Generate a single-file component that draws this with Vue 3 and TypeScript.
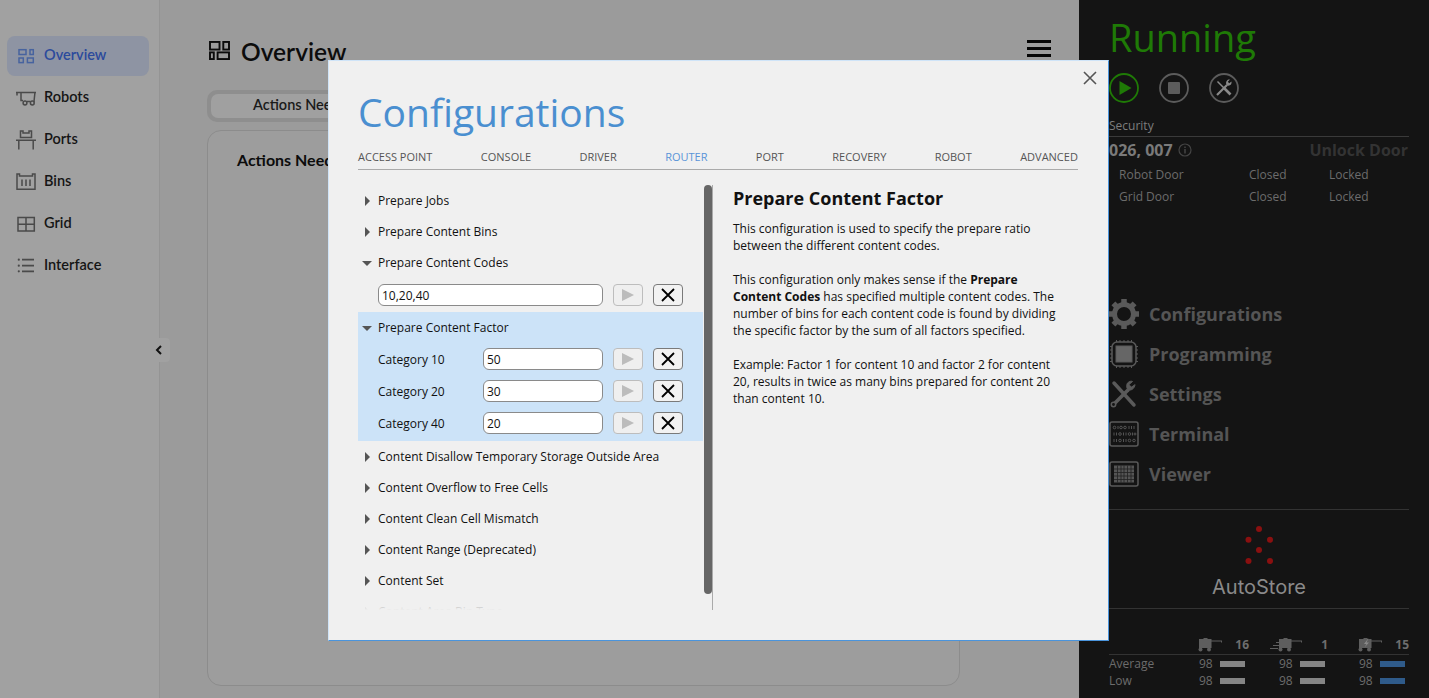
<script setup lang="ts">
const navItems = ['Overview', 'Robots', 'Ports', 'Bins', 'Grid', 'Interface']
const tabs = ['ACCESS POINT', 'CONSOLE', 'DRIVER', 'ROUTER', 'PORT', 'RECOVERY', 'ROBOT', 'ADVANCED']
const categories = [
  { label: 'Category 10', value: '50' },
  { label: 'Category 20', value: '30' },
  { label: 'Category 40', value: '20' }
]
const before = ['Prepare Jobs', 'Prepare Content Bins']
const after = [
  'Content Disallow Temporary Storage Outside Area',
  'Content Overflow to Free Cells',
  'Content Clean Cell Mismatch',
  'Content Range (Deprecated)',
  'Content Set',
  'Content Area Bin Type'
]
const menu = ['Configurations', 'Programming', 'Settings', 'Terminal', 'Viewer']
const doors = ['Robot Door', 'Grid Door']
const stats = ['Average', 'Low']
</script>

<template>
  <div class="page">
    <aside class="sidebar">
      <nav class="nav">
        <div v-for="(item, i) in navItems" :key="item" class="nav-item" :class="{ active: i === 0 }">
          <svg class="nav-icon" viewBox="0 0 20 20" fill="none" stroke="currentColor" stroke-width="1.5">
            <g v-if="i === 0">
              <rect x="3" y="5.700" width="7" height="4.800" /><rect x="14" y="5.700" width="3.300" height="4.800" />
              <rect x="3" y="14" width="4.300" height="4.600" /><rect x="11.400" y="14" width="5.900" height="4.600" />
            </g>
            <g v-else-if="i === 1">
              <path d="M0 6.500h20M1 6v3.500M19 6l-1 9.500h-.7M5 7v7.500h2M11 15.500h3.300" />
              <circle cx="9" cy="17" r="1.900" /><circle cx="16.300" cy="17" r="1.900" />
            </g>
            <g v-else-if="i === 2">
              <path d="M0 12.200h20M2.800 12.500v9M17.200 12.500v9M4.500 9.500V3h2.500v2h6V3h2.500v6.500z" />
            </g>
            <g v-else-if="i === 3">
              <path d="M1 4v15.300h18V4h-2.500v2h-13V4z" /><path d="M6 9.500V16M10 9.500V16M14 9.500V16" />
            </g>
            <g v-else-if="i === 4">
              <rect x="2" y="5.500" width="16.300" height="13.500" /><path d="M2 12.200h16.300M10 5.500V19" />
            </g>
            <g v-else>
              <path d="M6 5.700h12M6 11.700h12M6 17.300h12" stroke-width="1.700" />
              <circle cx="2.800" cy="5.700" r="1.100" fill="currentColor" stroke="none" />
              <circle cx="2.800" cy="11.700" r="1.100" fill="currentColor" stroke="none" />
              <circle cx="2.800" cy="17.300" r="1.100" fill="currentColor" stroke="none" />
            </g>
          </svg>
          <span>{{ item }}</span>
        </div>
      </nav>
      <button class="collapse" type="button">
        <svg viewBox="0 0 8 10" width="8" height="10"><path d="M6 1 2 5l4 4" fill="none" stroke="#111" stroke-width="2" /></svg>
      </button>
    </aside>

    <main class="main">
      <header class="main-head">
        <h1 class="main-title">
          <svg class="title-icon" viewBox="0 0 22 20" fill="none" stroke="#0c0c0c" stroke-width="2">
            <rect x="1" y="1" width="10" height="8" /><rect x="15" y="1" width="6" height="8" />
            <rect x="1" y="12" width="4" height="7" /><rect x="9" y="12" width="12" height="7" />
          </svg>
          Overview
        </h1>
        <div class="hamburger"><i></i><i></i><i></i></div>
      </header>
      <div class="pill"><div class="pill-btn">Actions Needed</div></div>
      <section class="card"><h2 class="card-title">Actions Needed</h2></section>
    </main>

    <aside class="panel">
      <div class="running">Running</div>
      <div class="controls">
        <svg class="ctl" viewBox="0 0 30 30"><circle cx="15" cy="15" r="14" fill="none" stroke="#1f7a06" stroke-width="1.800" /><path d="M10.500 8v14l12-7z" fill="#1f7a06" /></svg>
        <svg class="ctl" viewBox="0 0 30 30"><circle cx="15" cy="15" r="14" fill="none" stroke="#5c5c5c" stroke-width="1.800" /><rect x="9" y="9" width="12" height="12" rx="1" fill="#5c5c5c" /></svg>
        <svg class="ctl" viewBox="0 0 30 30">
          <circle cx="15" cy="15" r="14" fill="none" stroke="#5c5c5c" stroke-width="1.800" />
          <path d="M8.500 8.500 15 15" stroke="#8a8a8a" stroke-width="1.500" />
          <path d="M15 15l6.500 6.500" stroke="#8a8a8a" stroke-width="2.600" />
          <path d="M8 22 18 12" stroke="#8a8a8a" stroke-width="2.200" />
          <path d="M22.500 8.500c.6 2.500-1.500 5-4.500 4-1.500-1.500-1.200-4 .5-5.500.8-.5 1.700-.6 2.500-.4l-2.200 2.200 1.400 1.500z" fill="#8a8a8a" />
        </svg>
      </div>
      <div class="sec-label">Security</div>
      <div class="sec-row">
        <span class="door-id">026, 007</span>
        <svg class="info" viewBox="0 0 14 14"><circle cx="7" cy="7" r="6" fill="none" stroke="#444" stroke-width="1.200" /><path d="M7 6v4.500M7 3.500v1.500" stroke="#444" stroke-width="1.500" /></svg>
        <span class="unlock">Unlock Door</span>
      </div>
      <div v-for="d in doors" :key="d" class="door">
        <span class="door-name">{{ d }}</span><span class="door-state">Closed</span><span>Locked</span>
      </div>

      <div class="menu">
        <div v-for="(m, i) in menu" :key="m" class="menu-item">
          <svg class="menu-icon" viewBox="0 0 30 30" fill="none">
            <g v-if="i === 0" stroke="#5a5a5a">
              <circle cx="15" cy="15" r="9.500" stroke-width="5" />
              <path d="M15 0v30M0 15h30M4.400 4.400l21.200 21.200M25.600 4.400 4.400 25.600" stroke-width="5.500" stroke-dasharray="5.500 19 5.500" />
            </g>
            <g v-else-if="i === 1" stroke="#5a5a5a">
              <rect x="3" y="3" width="24" height="24" rx="5" stroke-width="1.500" />
              <rect x="7" y="7" width="16" height="16" fill="#666" stroke-width="1" />
              <path d="M7.500 1v2M11 1v2M15 1v2M19 1v2M22.500 1v2M7.500 27v2M11 27v2M15 27v2M19 27v2M22.500 27v2M1 7.500h2M1 11h2M1 15h2M1 19h2M1 22.500h2M27 7.500h2M27 11h2M27 15h2M27 19h2M27 22.500h2" stroke-width="1" />
            </g>
            <g v-else-if="i === 2" stroke="#5a5a5a" stroke-linecap="round">
              <path d="M5 4l20 22" stroke-width="3.500" />
              <path d="M4 26 19 11" stroke-width="3.500" />
              <path d="M26 6c-.5 3-3 5.500-6 5-2.500-1-3-4-1.500-7 2-2 4-2 5-1.500l-3.500 3 2 2.500z" fill="#5a5a5a" stroke-width="1" />
              <circle cx="4.500" cy="25.500" r="2.200" fill="#141414" stroke-width="1.500" />
            </g>
            <g v-else-if="i === 3" stroke="#5a5a5a">
              <rect x="1" y="3" width="28" height="24" rx="2" stroke-width="1.500" />
              <g stroke-width=".9">
                <circle cx="5.500" cy="8.500" r="1.300" /><path d="M9 7v3" /><circle cx="12" cy="8.500" r="1.300" /><circle cx="16" cy="8.500" r="1.300" /><path d="M20 7v3M22.500 7v3M25 7v3" />
                <path d="M5 13.500v3M7.500 13.500v3" /><circle cx="11" cy="15" r="1.300" /><path d="M14.500 13.500v3M17 13.500v3" /><circle cx="20.500" cy="15" r="1.300" /><path d="M23.500 13.500v3" /><circle cx="26" cy="15" r="1" />
                <path d="M5 20v3M7.500 20v3" /><circle cx="11" cy="21.500" r="1.300" /><path d="M14.500 20v3M17 20v3" /><circle cx="20.500" cy="21.500" r="1.300" /><circle cx="25" cy="21.500" r="1.300" />
              </g>
            </g>
            <g v-else stroke="#5a5a5a">
              <rect x="1" y="3" width="28" height="24" rx="2" stroke-width="1.500" />
              <rect x="5" y="6.500" width="20" height="17" fill="#555" stroke="none" />
              <path d="M8.500 6.500v17M12 6.500v17M15 6.500v17M18.500 6.500v17M22 6.500v17M5 10h20M5 13.500h20M5 17h20M5 20.500h20" stroke="#222" stroke-width=".8" />
            </g>
          </svg>
          <span>{{ m }}</span>
        </div>
      </div>

      <div class="brand">
        <svg class="dots" viewBox="0 0 28 42" fill="#8a1010">
          <circle cx="14" cy="4" r="3" /><circle cx="3.500" cy="14.700" r="3" /><circle cx="25" cy="14.700" r="3" />
          <circle cx="14" cy="25" r="3" /><circle cx="3.500" cy="36" r="3" /><circle cx="25" cy="36" r="3" />
        </svg>
        <div class="brand-name">AutoStore</div>
      </div>

      <div class="stat-head">
        <div class="sh-cell c1">
          <svg class="robot" viewBox="0 0 24 14" fill="#5e5e5e"><path d="M1 1h4l1-1h3l1 1h3.500v1.500H24v2h-1v-1H13.500V10H1z" /><circle cx="2.500" cy="11.500" r="2" /><circle cx="11" cy="11.500" r="2" /></svg>
          <span>16</span>
        </div>
        <div class="sh-cell c2">
          <svg class="robot wide" viewBox="0 0 32 14" fill="#5e5e5e"><path d="M9 1h4l1-1h3l1 1h3.500v1.500H32v2h-1v-1H21.500V10H9z" /><circle cx="10.500" cy="11.500" r="2" /><circle cx="19" cy="11.500" r="2" /><path d="M6 4h3v1H6zM3 7h6v1H3zM0 10h8v1H0z" /></svg>
          <span>1</span>
        </div>
        <div class="sh-cell c3">
          <svg class="robot" viewBox="0 0 24 14" fill="#5e5e5e"><path d="M1 1h4l1-1h3l1 1h3.500v1.500H24v2h-1v-1H13.500V10H1z" /><circle cx="2.500" cy="11.500" r="2" /><circle cx="11" cy="11.500" r="2" /><path d="M10.500 0 6 6h2.500L6.500 9.500 11 4.500H8.500z" fill="#8a8a8a" /></svg>
          <span>15</span>
        </div>
      </div>
      <div v-for="s in stats" :key="s" class="stat-row">
        <span class="stat-label">{{ s }}</span>
        <span v-for="n in 3" :key="n" class="stat-cell">98<i class="bar" :class="{ blue: n === 3 }"></i></span>
      </div>
    </aside>

    <div class="dialog">
      <svg class="close" viewBox="0 0 14 14"><path d="M1 1l12 12M13 1 1 13" stroke="#555" stroke-width="1.600" /></svg>
      <h2 class="dialog-title">Configurations</h2>
      <div class="tabs">
        <span v-for="t in tabs" :key="t" :class="{ current: t === 'ROUTER' }">{{ t }}</span>
      </div>
      <div class="dialog-body">
        <div class="list-wrap">
          <div class="list">
            <div v-for="b in before" :key="b" class="row"><i class="tri-right"></i>{{ b }}</div>
            <div class="row"><i class="tri-down"></i>Prepare Content Codes</div>
            <div class="field-row single">
              <input class="field" value="10,20,40" />
              <button class="btn" type="button"><i class="play"></i></button>
              <button class="btn x" type="button"><svg viewBox="0 0 14 14"><path d="M1 1l12 12M13 1 1 13" stroke="#000" stroke-width="1.800" /></svg></button>
            </div>
            <div class="selected">
              <div class="row"><i class="tri-down"></i>Prepare Content Factor</div>
              <div v-for="c in categories" :key="c.label" class="field-row">
                <label class="cat">{{ c.label }}</label>
                <input class="field" :value="c.value" />
                <button class="btn" type="button"><i class="play"></i></button>
                <button class="btn x" type="button"><svg viewBox="0 0 14 14"><path d="M1 1l12 12M13 1 1 13" stroke="#000" stroke-width="1.800" /></svg></button>
              </div>
            </div>
            <div v-for="a in after" :key="a" class="row"><i class="tri-right"></i>{{ a }}</div>
          </div>
          <div class="scroll-track"><div class="scroll-thumb"></div></div>
        </div>
        <div class="help">
          <h3 class="help-title">Prepare Content Factor</h3>
          <p>This configuration is used to specify the prepare ratio<br />between the different content codes.</p>
          <p>This configuration only makes sense if the <b>Prepare<br />Content Codes</b> has specified multiple content codes. The<br />number of bins for each content code is found by dividing<br />the specific factor by the sum of all factors specified.</p>
          <p>Example: Factor 1 for content 10 and factor 2 for content<br />20, results in twice as many bins prepared for content 20<br />than content 10.</p>
        </div>
      </div>
    </div>
  </div>
</template>

<style>
html, body { margin: 0; overflow: hidden; background: #9b9b9b; }
</style>

<style scoped>
.page {
  position: relative;
  display: flex;
  width: 1429px;
  height: 698px;
  overflow: hidden;
  font-family: "Open Sans", sans-serif;
}
.sidebar {
  position: relative;
  flex: 0 0 160px;
  box-sizing: border-box;
  background: #a1a1a1;
  border-right: 1px solid #949494;
  padding: 36px 10px 0 7px;
  font-family: Lato, sans-serif;
}
.nav { display: flex; flex-direction: column; }
.nav-item {
  display: flex;
  align-items: center;
  gap: 8px;
  height: 40px;
  box-sizing: border-box;
  padding-bottom: 3px;
  margin-bottom: 2px;
  padding-left: 9px;
  border-radius: 8px;
  font-size: 14.5px;
  font-weight: 600;
  color: #151515;
}
.nav-item .nav-icon { color: #4a4a4a; }
.nav-item.active { background: #8e94a3; color: #2b4a9c; }
.nav-item.active .nav-icon { color: #47639f; }
.nav-icon { width: 20px; height: 20px; flex: none; margin-top: -1px; overflow: visible; }
.collapse {
  position: absolute;
  top: 338px;
  left: 150px;
  width: 20px;
  height: 24px;
  padding: 0;
  border: 0;
  border-radius: 0 4px 4px 0;
  background: #a1a1a1;
  display: flex;
  align-items: center;
  justify-content: center;
}
.collapse svg { margin-left: -3px; }

.main { flex: 1; min-width: 0; background: #9b9b9b; padding: 37px 28px 12px 47px; box-sizing: border-box; font-family: Lato, sans-serif; }
.main-head { display: flex; align-items: center; justify-content: space-between; height: 28px; }
.main-title { display: flex; align-items: center; gap: 11px; margin: 0 0 0 2px; font-size: 24.5px; font-weight: 600; color: #0c0c0c; }
.title-icon { width: 21px; height: 19px; margin-top: -2px; }
.hamburger { display: flex; flex-direction: column; gap: 4px; width: 24px; margin-top: -6px; }
.hamburger i { display: block; height: 3px; background: #050505; }
.pill { width: 200px; height: 32px; margin-top: 25px; padding: 4px; box-sizing: border-box; background: #8e8e8e; border-radius: 10px; }
.pill-btn { height: 24px; line-height: 22px; padding-left: 42px; background: #a0a0a0; border-radius: 7px; font-size: 14.500px; font-weight: 600; color: #1a1a1a; }
.card { width: 753px; height: 556px; margin-top: 8px; box-sizing: border-box; border: 1px solid #8c8c8c; border-radius: 14px; background: #9d9d9d; padding: 19px 29px; }
.card-title { margin: 0; font-size: 16px; font-weight: 700; color: #0c0c0c; }

.panel { flex: 0 0 350px; min-width: 0; box-sizing: border-box; background: #141414; padding: 13px 20px 0 30px; color: #6e6e6e; }
.running { font-size: 38px; line-height: 48px; color: #1f7a06; }
.controls { display: flex; gap: 20px; margin-top: 12px; height: 30px; }
.ctl { width: 30px; height: 30px; }
.sec-label { margin-top: 15px; font-size: 12px; line-height: 16px; color: #7d7d7d; border-bottom: 1px solid #3a3a3a; padding-bottom: 2px; }
.sec-row { display: flex; align-items: center; height: 26px; margin-bottom: 1px; }
.door-id { font-size: 16px; font-weight: 700; color: #7a7a7a; }
.info { width: 14px; height: 14px; margin-left: 5px; }
.unlock { margin-left: auto; margin-right: 1px; font-size: 16px; font-weight: 700; color: #333; }
.door { display: flex; height: 22px; line-height: 22px; padding-left: 10px; font-size: 12px; color: #6c6c6c; }
.door-name { width: 130px; }
.door-state { width: 80px; }
.menu { margin-top: 86px; display: flex; flex-direction: column; }
.menu-item { display: flex; align-items: center; gap: 10px; height: 40px; font-size: 18px; font-weight: 700; color: #555; }
.menu-icon { width: 30px; height: 30px; flex: none; }
.brand { margin-top: 15px; border-top: 1px solid #333; border-bottom: 1px solid #333; height: 100px; box-sizing: border-box; display: flex; flex-direction: column; align-items: center; }
.dots { width: 28px; height: 42px; margin-top: 15px; }
.brand-name { margin-top: 8px; font-family: Inter, sans-serif; font-size: 20px; line-height: 24px; color: #8a8a8a; }
.stat-head { display: flex; margin-top: 26px; padding-left: 89px; height: 19px; border-bottom: 1px solid #333; font-size: 12px; font-weight: 700; color: #6e6e6e; }
.sh-cell { display: flex; justify-content: space-between; align-items: center; flex: none; }
.c1 { width: 51px; }
.c2 { width: 58px; margin-left: 21px; }
.c3 { width: 51px; margin-left: 30px; }
.robot { width: 24px; height: 14px; }
.robot.wide { width: 32px; }
.stat-row { display: flex; height: 17px; line-height: 17px; font-size: 12px; color: #6c6c6c; }
.stat-label { width: 90px; flex: none; }
.stat-cell { display: flex; align-items: center; width: 80px; flex: none; }
.stat-cell:last-child { width: 50px; }
.bar { width: 25px; height: 6px; margin-left: 7px; background: #858585; flex: none; }
.bar.blue { background: #2f5b8a; }

.dialog {
  position: absolute;
  top: 60px;
  left: 328px;
  width: 781px;
  height: 581px;
  box-sizing: border-box;
  background: #f0f0f0;
  border: 1px solid #cfe4f8;
  border-right-color: #4a94dc;
  border-bottom-color: #4a94dc;
  padding: 23px 30px 0 30px;
  color: #111;
}
.close { position: absolute; top: 10px; right: 11px; width: 14px; height: 14px; }
.dialog-title { margin: 0 0 0 -1px; font-size: 39px; line-height: 56px; font-weight: 400; color: #4a8fd0; }
.tabs { display: flex; justify-content: space-between; height: 30px; margin-left: -1px; padding-top: 9px; box-sizing: border-box; line-height: 16px; border-bottom: 1px solid #aaa; font-size: 11px; color: #555; }
.tabs .current { color: #5a94d8; }
.dialog-body { display: flex; margin-top: 15px; margin-left: -1px; }
.list-wrap { position: relative; flex: 0 0 355px; height: 425px; overflow: hidden; display: flex; }
.list-wrap::after { content: ""; position: absolute; left: 0; right: 10px; bottom: 0; height: 20px; background: linear-gradient(rgba(240,240,240,0), #f0f0f0); }
.list { width: 345px; flex: none; font-size: 12px; color: #111; }
.row { display: flex; align-items: center; height: 31px; padding-left: 20px; position: relative; }
.tri-right, .tri-down { position: absolute; width: 0; height: 0; }
.tri-right { left: 7px; top: 10.500px; border-left: 5.500px solid #555; border-top: 5px solid transparent; border-bottom: 5px solid transparent; }
.tri-down { left: 4px; top: 13.500px; border-top: 5.500px solid #555; border-left: 5px solid transparent; border-right: 5px solid transparent; }
.selected { background: #cce3f8; height: 129px; }
.field-row { display: flex; align-items: center; height: 32px; padding-left: 20px; }
.field-row.single { height: 34px; }
.cat { width: 105px; flex: none; }
.field { flex: 1; min-width: 0; height: 22px; box-sizing: border-box; padding: 0 3px; border: 1px solid #8a8a8a; border-radius: 6px; background: #fff; font: 12px "Open Sans", sans-serif; color: #111; outline: none; }
.btn { flex: none; width: 30px; height: 22px; margin-left: 10px; padding: 0; box-sizing: border-box; border: 1px solid #bdbdbd; border-radius: 4px; background: #efefef; display: flex; align-items: center; justify-content: center; }
.btn.x { border-color: #7a7a7a; background: #f2f2f2; margin-right: 20px; }
.btn.x svg { width: 14px; height: 14px; }
.play { width: 0; height: 0; border-left: 12px solid #bcbcbc; border-top: 6px solid transparent; border-bottom: 6px solid transparent; }
.scroll-track { position: relative; flex: 0 0 10px; height: 100%; }
.scroll-track::after { content: ""; position: absolute; top: 0; bottom: 0; right: 0; width: 1px; background: #aaa; }
.scroll-thumb { position: absolute; z-index: 1; top: 0; left: 1px; width: 8px; height: 409px; border-radius: 4px; background: #666; }
.help { flex: 1; padding-left: 20px; font-size: 12px; line-height: 17px; color: #111; }
.help-title { margin: 0 0 9px; font-size: 18px; line-height: 26px; font-weight: 700; color: #111; }
.help p { margin: 0 0 17px; }
.help b { font-weight: 700; }
</style>
